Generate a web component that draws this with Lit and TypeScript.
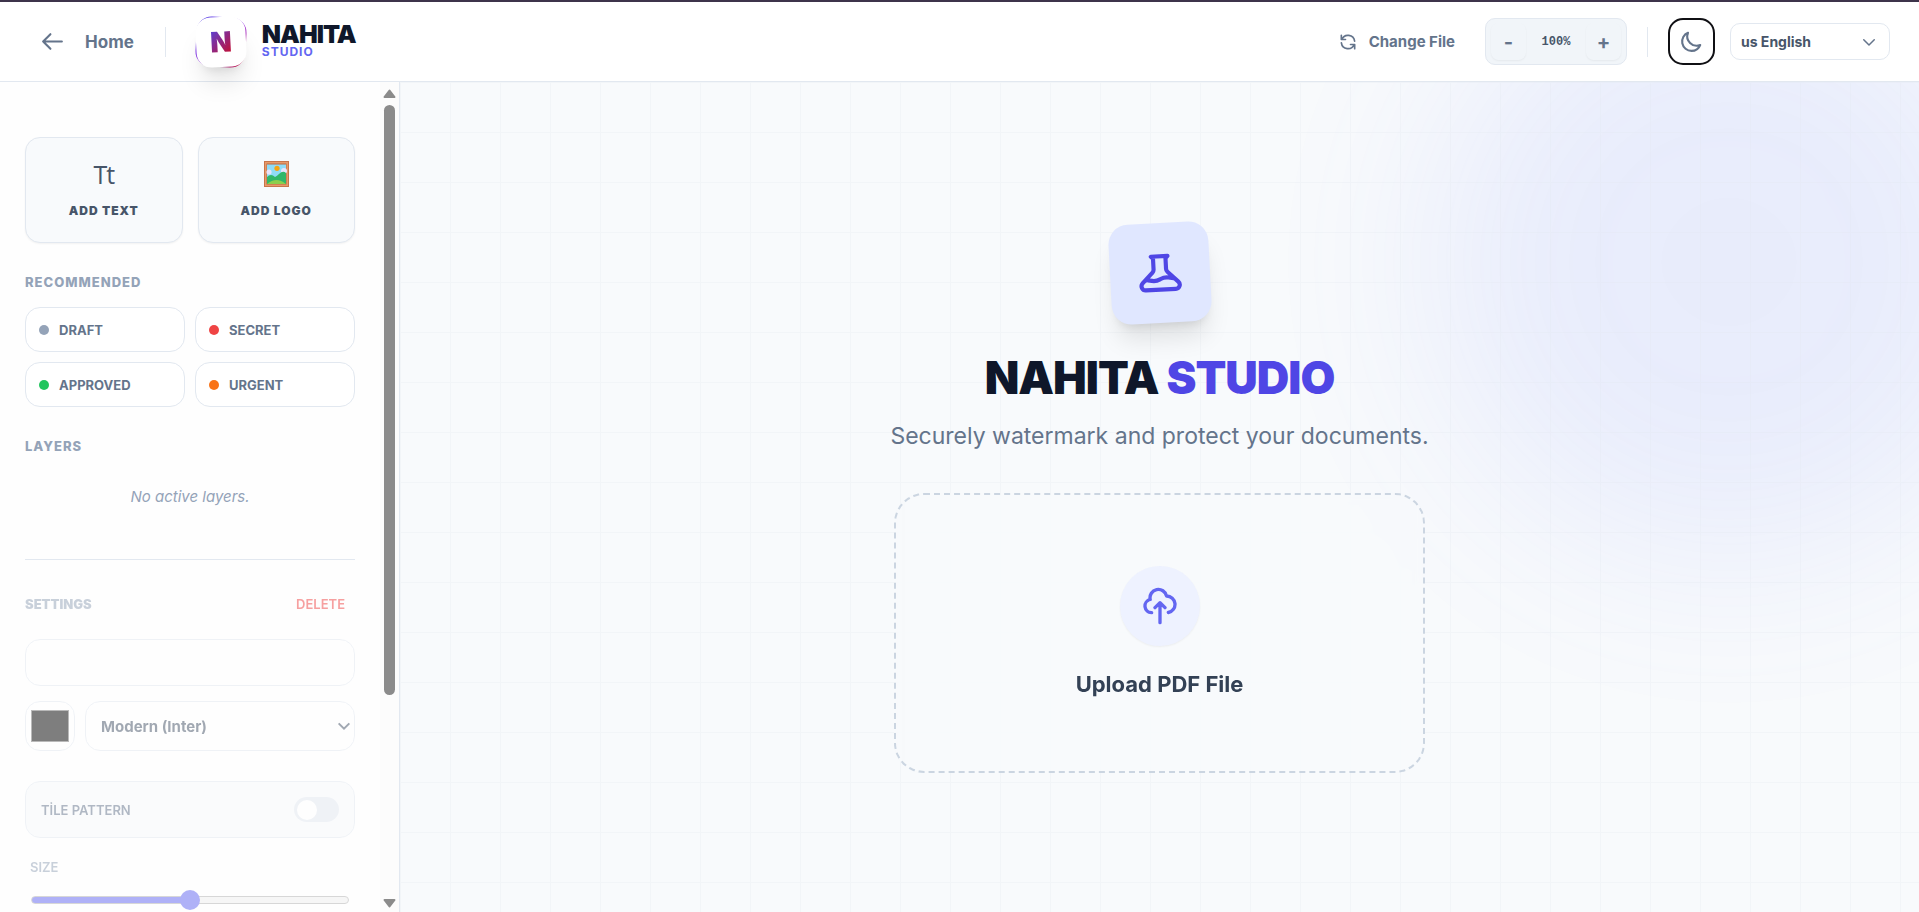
import { LitElement, html, css } from "lit";
import { customElement, property, state } from "lit/decorators.js";
import { classMap } from "lit/directives/class-map.js";

const shared = css`
  :host, *, *::before, *::after { box-sizing: border-box; }
  button, input, select { font-family: inherit; margin: 0; }
  button { cursor: pointer; padding: 0; border: 0; background: none; }
  h1, h2, p { margin: 0; }
  svg { display: block; flex: none; }
  .line { fill: none; stroke: currentColor; stroke-width: 2; stroke-linecap: round; stroke-linejoin: round; }
`;

@customElement("studio-header")
class StudioHeader extends LitElement {
  @state() private zoom = 100;

  static styles = [shared, css`
    :host { display: block; position: relative; z-index: 2; background: #fff; border-top: 2px solid #3d344b; border-bottom: 1px solid #e2e8f0; }
    .bar { display: flex; align-items: center; justify-content: space-between; height: 79px; padding: 0 29px 0 40px; color: #64748b; }
    .side { display: flex; align-items: center; }
    .home { display: flex; align-items: center; gap: 20px; font-size: 17px; line-height: 24px; font-weight: 700; color: inherit; text-decoration: none; }
    .rule { width: 1px; height: 30px; background: #e2e8f0; }
    .left .rule { margin: 0 30px 0 31px; }
    .brand { display: flex; align-items: center; gap: 16px; }
    .logo { display: grid; width: 50px; height: 50px; }
    .logo > * { grid-area: 1 / 1; border-radius: 15px; }
    .glow { background: linear-gradient(135deg, #4f46e5, #9333ea 50%, #e11d48); transform: rotate(3deg); }
    .face { display: grid; place-items: center; background: #fff; transform: rotate(-3deg); box-shadow: 0 20px 25px -5px #0000001a, 0 8px 10px -6px #0000001a; }
    .letter { font-size: 28px; line-height: 30px; font-weight: 900; background: linear-gradient(135deg, #4f46e5, #be123c 85%); background-clip: text; -webkit-background-clip: text; color: transparent; }
    .name { display: flex; flex-direction: column; padding-bottom: 2px; }
    .title { font-size: 25px; line-height: 22px; font-weight: 900; letter-spacing: -1px; color: #0f172a; }
    .sub { font-size: 12px; line-height: 14px; font-weight: 700; letter-spacing: 1px; color: #6366f1; }
    .change { display: flex; align-items: center; gap: 11px; margin-right: 30px; color: inherit; font-size: 15px; line-height: 24px; font-weight: 700; }
    .zoom { display: flex; align-items: center; height: 47px; padding: 0 5px; border: 1px solid #e2e8f0; border-radius: 10px; background: #f1f5f9; }
    .step { width: 35px; height: 37px; border-radius: 8px; color: #64748b; font-size: 20px; font-weight: 700; box-shadow: 0 1px 2px #0000000d; }
    .level { width: 60px; text-align: center; font-family: "Liberation Mono", monospace; font-size: 12px; font-weight: 700; color: #475569; }
    .right .rule { margin: 0 20px; }
    .theme { display: grid; place-items: center; width: 47px; height: 47px; border: 2px solid #101014; border-radius: 15px; color: #64748b; background: #fff; }
    .lang { display: flex; align-items: center; position: relative; margin-left: 15px; color: #64748b; }
    .lang select { appearance: none; width: 160px; height: 37px; padding: 0 36px 0 10px; border: 1px solid #e2e8f0; border-radius: 10px; background: #fff; color: #475569; font-size: 14px; font-weight: 700; }
    .lang svg { position: absolute; right: 12px; pointer-events: none; }
  `];

  render() {
    return html`
      <header class="bar">
        <div class="side left">
          <a class="home" href="#home">
            <svg class="line" width="25" height="25" viewBox="0 0 24 24"><path d="M10 19l-7-7m0 0l7-7m-7 7h18" /></svg>
            Home
          </a>
          <span class="rule"></span>
          <div class="brand">
            <div class="logo">
              <span class="glow"></span>
              <span class="face"><span class="letter">N</span></span>
            </div>
            <div class="name"><span class="title">NAHITA</span><span class="sub">STUDIO</span></div>
          </div>
        </div>
        <div class="side right">
          <button class="change" type="button">
            <svg class="line" width="20" height="20" viewBox="0 0 24 24"><path d="M4 4v5h.582m15.356 2A8.001 8.001 0 004.582 9m0 0H9m11 11v-5h-.581m0 0a8.003 8.003 0 01-15.357-2m15.357 2H15" /></svg>
            Change File
          </button>
          <div class="zoom">
            <button class="step" type="button" @click=${() => (this.zoom -= 10)}>-</button>
            <span class="level">${this.zoom}%</span>
            <button class="step" type="button" @click=${() => (this.zoom += 10)}>+</button>
          </div>
          <span class="rule"></span>
          <button class="theme" type="button" aria-label="Dark mode">
            <svg class="line" width="25" height="25" viewBox="0 0 24 24"><path d="M20.354 15.354A9 9 0 018.646 3.646 9.003 9.003 0 0012 21a9.003 9.003 0 008.354-5.646z" /></svg>
          </button>
          <div class="lang">
            <select aria-label="Language"><option>us English</option></select>
            <svg class="line" width="18" height="18" viewBox="0 0 24 24"><path d="M5 9l7 7 7-7" /></svg>
          </div>
        </div>
      </header>
    `;
  }
}

@customElement("studio-sidebar")
class StudioSidebar extends LitElement {
  @property({ type: Boolean }) empty = true;

  private presets = [
    { name: "DRAFT", tone: "slate" },
    { name: "SECRET", tone: "red" },
    { name: "APPROVED", tone: "green" },
    { name: "URGENT", tone: "orange" },
  ];

  static styles = [shared, css`
    :host { display: flex; flex: none; width: 400px; min-height: 0; background: #fefefe; border-right: 1px solid #e2e8f0; }
    .panel { flex: 1; min-width: 0; overflow-y: auto; scrollbar-width: none; padding: 55px 25px 25px; }
    .pair { display: grid; grid-template-columns: 1fr 1fr; }
    .tools { gap: 15px; }
    .tool { display: flex; flex-direction: column; align-items: center; justify-content: center; gap: 14px; height: 106px; border: 1px solid #e2e8f0; border-radius: 15px; background: #f8fafc; box-shadow: 0 1px 2px #0000000d; color: #475569; font-size: 12px; line-height: 18px; font-weight: 900; letter-spacing: 1px; }
    .glyph { display: grid; place-items: center; height: 28px; font-family: "Open Sans", sans-serif; font-size: 25px; line-height: 28px; font-weight: 400; letter-spacing: -1px; }
    .heading { margin-top: 30px; font-size: 13px; line-height: 18px; font-weight: 800; letter-spacing: 1px; color: #94a3b8; }
    .presets { gap: 10px; margin-top: 16px; }
    .preset { display: flex; align-items: center; gap: 10px; height: 45px; padding: 0 13px; border: 1px solid #e2e8f0; border-radius: 15px; background: #fff; color: #64748b; font-size: 13px; font-weight: 700; }
    .dot { width: 10px; height: 10px; border-radius: 50%; background: #94a3b8; }
    .dot.red { background: #ef4444; }
    .dot.green { background: #22c55e; }
    .dot.orange { background: #f97316; }
    .none { margin-top: 32px; padding-bottom: 52px; border-bottom: 1px solid #e2e8f0; text-align: center; font-size: 15px; line-height: 20px; font-style: italic; color: #94a3b8; }
    .settings { margin-top: 35px; }
    .disabled { opacity: 0.5; }
    .row { display: flex; align-items: center; justify-content: space-between; }
    .row .heading { margin: 0; font-weight: 900; letter-spacing: 0; }
    .delete { padding: 0 10px; color: #ef4444; font-size: 13px; line-height: 18px; font-weight: 600; }
    .text { display: block; width: 100%; height: 47px; margin-top: 26px; padding: 0 15px; border: 1px solid #e2e8f0; border-radius: 15px; background: #fff; font-size: 16px; }
    .style { display: flex; gap: 10px; margin-top: 15px; }
    .color { appearance: none; width: 50px; height: 50px; padding: 5px; border: 1px solid #e2e8f0; border-radius: 15px; background: #fff; }
    .color::-webkit-color-swatch-wrapper { padding: 3px 0; }
    .color::-webkit-color-swatch { border: 1px solid #767676; border-radius: 0; }
    .font { position: relative; flex: 1; display: flex; align-items: center; color: #475569; }
    .font select { appearance: none; width: 100%; height: 50px; padding: 0 15px; border: 1px solid #e2e8f0; border-radius: 15px; background: #fff; color: #475569; font-size: 15px; font-weight: 700; opacity: 1; }
    .font svg { position: absolute; right: 3px; stroke-width: 3; stroke-linecap: butt; stroke-linejoin: miter; pointer-events: none; }
    .tile { margin-top: 30px; height: 57px; padding: 0 15px; border: 1px solid #e2e8f0; border-radius: 15px; background: #f8fafc; color: #64748b; font-size: 13px; font-weight: 600; }
    .switch { appearance: none; display: flex; align-items: center; width: 45px; height: 25px; padding: 3px; border-radius: 13px; background: #e2e8f0; }
    .switch::before { content: ""; width: 20px; height: 20px; border-radius: 50%; background: #fff; }
    .size { display: block; margin: 20px 5px 0; font-size: 13px; line-height: 18px; font-weight: 600; color: #94a3b8; }
    .range { appearance: none; display: block; width: calc(100% - 12px); height: 20px; margin: 14px 6px 0; background: none; }
    .range::-webkit-slider-runnable-track { height: 8px; border: 1px solid #b2b2b2; border-radius: 4px; background: linear-gradient(90deg, #6366f1 50%, #efefef 50%); }
    .range::-webkit-slider-thumb { appearance: none; width: 20px; height: 20px; margin-top: -7px; border-radius: 50%; background: #6366f1; }
    .scroll { display: flex; flex-direction: column; align-items: center; width: 19px; padding: 7px 0 4px; background: #fcfcfc; color: #8b8b8b; }
    .track { flex: 1; width: 11px; padding: 7px 0; }
    .thumb { height: 75%; border-radius: 6px; background: #8b8b8b; }
  `];

  render() {
    return html`
      <aside class="panel">
        <div class="pair tools">
          <button class="tool" type="button"><span class="glyph">Tt</span>ADD TEXT</button>
          <button class="tool" type="button">
            <span class="glyph">
              <svg width="25" height="26" viewBox="0 0 25 26">
                <rect width="25" height="26" fill="#c8754a" />
                <rect x="1" y="1" width="23" height="24" fill="#e79a6b" />
                <rect x="2.5" y="2.5" width="20" height="21" fill="#b9683f" />
                <rect x="3" y="3.5" width="19" height="19.5" fill="#8fdcf8" />
                <circle cx="5" cy="11" r="2.6" fill="#e9e4fb" />
                <circle cx="20" cy="10" r="3" fill="#e9e4fb" />
                <circle cx="13" cy="7.3" r="2.6" fill="#f6a411" />
                <path d="M3 16q4-4 8 0q2-1 4-3q4-4 7-1v11H3z" fill="#31b76a" />
                <path d="M3 23q9.500-8 19 0z" fill="#8ccf4d" />
              </svg>
            </span>ADD LOGO
          </button>
        </div>
        <h2 class="heading">RECOMMENDED</h2>
        <div class="pair presets">
          ${this.presets.map((p) => html`
            <button class="preset" type="button"><span class=${classMap({ dot: true, [p.tone]: true })}></span>${p.name}</button>
          `)}
        </div>
        <h2 class="heading">LAYERS</h2>
        <p class="none">No active layers.</p>
        <div class=${classMap({ settings: true, disabled: this.empty })}>
          <div class="row">
            <h2 class="heading">SETTINGS</h2>
            <button class="delete" type="button">DELETE</button>
          </div>
          <input class="text" type="text" aria-label="Watermark text" />
          <div class="style">
            <input class="color" type="color" value="#000000" aria-label="Text color" />
            <div class="font">
              <select aria-label="Font"><option>Modern (Inter)</option></select>
              <svg class="line" width="16" height="16" viewBox="0 0 24 24"><path d="M4 8l8 8 8-8" /></svg>
            </div>
          </div>
          <div class="row tile">
            <label for="tile">TİLE PATTERN</label>
            <input class="switch" id="tile" type="checkbox" />
          </div>
          <label class="size" for="size">SIZE</label>
          <input class="range" id="size" type="range" min="0" max="100" value="50" />
        </div>
      </aside>
      <div class="scroll" aria-hidden="true">
        <svg width="13" height="9" viewBox="0 0 13 9"><path d="M6.500 1.500L11.500 8H1.500z" fill="currentColor" stroke="currentColor" stroke-width="2" stroke-linejoin="round" /></svg>
        <div class="track"><div class="thumb"></div></div>
        <svg width="13" height="9" viewBox="0 0 13 9"><path d="M6.500 7.500L11.500 1H1.500z" fill="currentColor" stroke="currentColor" stroke-width="2" stroke-linejoin="round" /></svg>
      </div>
    `;
  }
}

@customElement("studio-canvas")
class StudioCanvas extends LitElement {
  static styles = [shared, css`
    :host { position: relative; display: grid; place-items: center; flex: 1; min-width: 0; overflow: hidden; background: #f8fafc; }
    .blob { position: absolute; top: -120px; right: -110px; width: 600px; height: 600px; border-radius: 50%; background: #6378fa; opacity: 0.1; filter: blur(90px); }
    .grid { position: absolute; inset: 0; background-image: linear-gradient(#e2e8f0 1px, transparent 1px), linear-gradient(90deg, #e2e8f0 1px, transparent 1px); background-size: 50px 50px; opacity: 0.25; }
    .hero { position: relative; display: flex; flex-direction: column; align-items: center; padding-top: 2px; }
    .badge { display: grid; place-items: center; width: 100px; height: 100px; border-radius: 20px; background: #e0e7ff; color: #4f46e5; transform: rotate(-3deg); box-shadow: 0 20px 25px -5px #0000001a, 0 8px 10px -6px #0000001a; }
    h1 { margin-top: 30px; font-size: 45px; line-height: 50px; font-weight: 900; letter-spacing: -1px; color: #0f172a; }
    .accent { color: #4f46e5; }
    .lead { margin-top: 18px; font-size: 23px; line-height: 30px; font-weight: 400; color: #64748b; }
    .drop { display: flex; flex-direction: column; align-items: center; justify-content: center; gap: 22px; align-self: stretch; height: 280px; margin: 42px 4px 0; border: 2px dashed #cbd5e1; border-radius: 30px; background: #f8fafc80; backdrop-filter: blur(5px); color: #334155; font-size: 22px; line-height: 32px; font-weight: 700; }
    .cloud { display: grid; place-items: center; width: 80px; height: 80px; border-radius: 50%; background: #eef2ff; color: #6366f1; box-shadow: 0 1px 2px #0000000d; }
  `];

  render() {
    return html`
      <div class="blob"></div>
      <div class="grid"></div>
      <section class="hero">
        <div class="badge">
          <svg class="line" width="50" height="50" viewBox="0 0 24 24"><path d="M19.428 15.428a2 2 0 00-1.022-.547l-2.387-.477a6 6 0 00-3.86.517l-.318.158a6 6 0 01-3.86.517L6.050 15.210a2 2 0 00-1.806.547M8 4h8l-1 1v5.172a2 2 0 00.586 1.414l5 5c1.260 1.260.367 3.414-1.415 3.414H4.828c-1.782 0-2.674-2.154-1.414-3.414l5-5A2 2 0 009 10.172V5L8 4z" /></svg>
        </div>
        <h1>NAHITA <span class="accent">STUDIO</span></h1>
        <p class="lead">Securely watermark and protect your documents.</p>
        <button class="drop" type="button">
          <span class="cloud">
            <svg class="line" width="40" height="40" viewBox="0 0 24 24"><path d="M7 16a4 4 0 01-.88-7.903A5 5 0 1115.900 6L16 6a5 5 0 011 9.900M15 13l-3-3m0 0l-3 3m3-3v12" /></svg>
          </span>
          Upload PDF File
        </button>
      </section>
    `;
  }
}

@customElement("app-root")
class AppRoot extends LitElement {
  static styles = css`
    :host { display: flex; flex-direction: column; height: 100vh; overflow: hidden; font-family: Inter, "Liberation Sans", sans-serif; }
    .body { display: flex; flex: 1; min-height: 0; }
  `;

  render() {
    return html`
      <studio-header></studio-header>
      <div class="body">
        <studio-sidebar></studio-sidebar>
        <studio-canvas></studio-canvas>
      </div>
    `;
  }
}
